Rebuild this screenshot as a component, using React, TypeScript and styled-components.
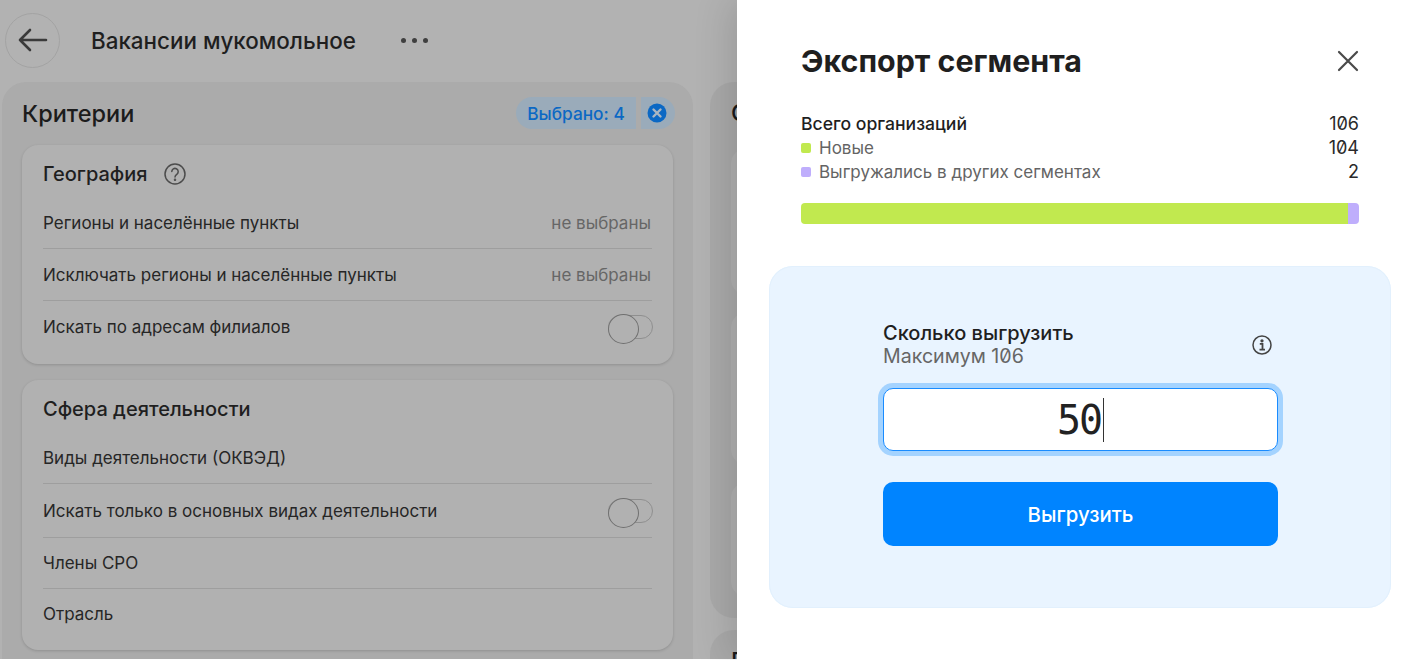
import styled, { createGlobalStyle } from 'styled-components';

const GlobalStyle = createGlobalStyle`
  html, body { margin: 0; padding: 0; background: #fff; }
  body { font-family: 'Inter', 'Liberation Sans', sans-serif; color: #1f1f1f; }
  * { box-sizing: border-box; }
`;

const Screen = styled.div`
  display: flex;
  width: 1418px;
  height: 660px;
  overflow: hidden;
`;

const Backdrop = styled.div`
  width: 737px;
  height: 659px;
  flex: none;
  background: #b2b2b2;
  overflow: hidden;
`;

const TopBar = styled.header`
  display: flex;
  align-items: center;
  height: 82px;
  padding: 0 0 2px 5px;
`;

const BackButton = styled.div`
  width: 55px;
  height: 55px;
  border-radius: 50%;
  border: 1px solid #a3a3a3;
  display: flex;
  align-items: center;
  justify-content: center;
  color: #3a3a3a;
`;

const PageTitle = styled.h1`
  margin: 0 0 0 31px;
  font-size: 22.4px;
  font-weight: 500;
`;

const Dots = styled.div`
  display: flex;
  gap: 6px;
  margin-left: 45px;
  span {
    width: 5px;
    height: 5px;
    border-radius: 50%;
    background: #3f3f3f;
  }
`;

const Columns = styled.div`
  display: flex;
  gap: 17px;
  padding-left: 2px;
`;

const Column = styled.section`
  width: 691px;
  flex: none;
  height: 640px;
  padding: 15px 20px 0;
  border-radius: 24px;
  background: #ababab;
`;

const SideColumn = styled.div`
  display: flex;
  flex-direction: column;
  gap: 12px;
`;

const SidePanel = styled.section<{ $height: number }>`
  width: 300px;
  height: ${(p) => p.$height}px;
  padding: 15px 21px 0;
  border-radius: 24px;
  background: #a9a9a9;
  display: flex;
  flex-direction: column;
  gap: 17px;
`;

const SideTitle = styled.div`
  font-size: 23.5px;
  font-weight: 500;
  line-height: 32px;
  margin-bottom: 2px;
  color: #1a1a1a;
`;

const SideCard = styled.div<{ $height: number }>`
  height: ${(p) => p.$height}px;
  flex: none;
  border-radius: 16px;
  background: #b0b0b0;
`;

const ColumnHead = styled.div`
  display: flex;
  align-items: center;
  justify-content: space-between;
  height: 32px;
  margin-bottom: 16px;
`;

const ColumnTitle = styled.h2`
  margin: 0;
  font-size: 23.5px;
  font-weight: 500;
  color: #1c1c1c;
`;

const Chips = styled.div`
  display: flex;
  gap: 5px;
  margin-right: -2px;
`;

const Chip = styled.div`
  width: 120px;
  height: 32px;
  display: flex;
  align-items: center;
  justify-content: center;
  font-size: 17.3px;
  font-weight: 500;
  color: #0b68c4;
  background: #9aabba;
  border-radius: 16px 0 0 16px;
`;

const ChipClose = styled.div`
  width: 34px;
  height: 32px;
  padding-right: 2px;
  display: flex;
  align-items: center;
  justify-content: center;
  background: #9aabba;
  border-radius: 0 16px 16px 0;
`;

const Card = styled.div`
  width: 651px;
  padding: 13px 21px 12px;
  margin-bottom: 16px;
  border-radius: 16px;
  background: #b1b1b1;
  box-shadow: 0 1px 3px rgba(0, 0, 0, 0.16);
`;

const CardTitle = styled.h3`
  display: flex;
  align-items: center;
  gap: 15px;
  margin: 0 0 7px;
  height: 32px;
  font-size: 20px;
  font-weight: 500;
  color: #1f1f1f;
`;

const Row = styled.div<{ $height?: number; $last?: boolean }>`
  display: flex;
  align-items: center;
  justify-content: space-between;
  height: ${(p) => p.$height ?? 52}px;
  font-size: 17px;
  color: #262626;
  border-bottom: ${(p) => (p.$last ? 'none' : '1px solid #9e9e9e')};
`;

const RowValue = styled.span`
  color: #666;
  margin-right: 1px;
`;

const Toggle = styled.div`
  position: relative;
  width: 45px;
  height: 24px;
  margin-right: -1px;
  border-radius: 12px;
  border: 1px solid #8f8f8f;
  &::before {
    content: '';
    position: absolute;
    left: -1px;
    top: -2px;
    width: 29px;
    height: 28px;
    border-radius: 50%;
    border: 1px solid #707070;
    background: #b1b1b1;
  }
`;

const Drawer = styled.aside`
  position: relative;
  flex: 1;
  background: #fff;
  padding: 36px 27px 0 32px;
  box-shadow: -6px 0 36px rgba(0, 0, 0, 0.14);
`;

const DrawerHead = styled.div`
  display: flex;
  align-items: center;
  justify-content: space-between;
  height: 50px;
  margin: 0 32px;
`;

const DrawerTitle = styled.h2`
  margin: 0;
  font-size: 30.4px;
  font-weight: 700;
  color: #1f1f1f;
`;

const Stats = styled.div`
  margin: 26px 32px 0;
`;

const StatRow = styled.div<{ $muted?: boolean }>`
  display: flex;
  justify-content: space-between;
  height: 24px;
  line-height: 24px;
  font-size: ${(p) => (p.$muted ? 17 : 17.6)}px;
  color: ${(p) => (p.$muted ? '#646464' : '#1f1f1f')};
  font-weight: ${(p) => (p.$muted ? 400 : 500)};
`;

const StatLabel = styled.span`
  display: flex;
  align-items: center;
  gap: 8px;
`;

const StatValue = styled.span`
  color: #2a2a2a;
  font-weight: 400;
  font-size: 18px;
  font-feature-settings: 'zero';
`;

const Mark = styled.i<{ $color: string }>`
  width: 10px;
  height: 10px;
  border-radius: 2px;
  background: ${(p) => p.$color};
`;

const Bar = styled.div`
  display: flex;
  height: 21px;
  margin: 19px 32px 0;
  border-radius: 4px;
  overflow: hidden;
`;

const BarPart = styled.div<{ $color: string }>`
  background: ${(p) => p.$color};
`;

const ExportBox = styled.div`
  width: 622px;
  height: 342px;
  margin-top: 42px;
  padding: 56px 113px 0 114px;
  border-radius: 24px;
  background: #e9f4ff;
  box-shadow: inset 0 0 0 1px #e2f0fd;
`;

const BoxHead = styled.div`
  display: flex;
  align-items: center;
  justify-content: space-between;
  padding-right: 6px;
`;

const BoxLabel = styled.div`
  font-size: 20px;
  font-weight: 500;
  line-height: 23px;
  color: #1f1f1f;
`;

const BoxHint = styled.div`
  font-size: 19.6px;
  line-height: 23px;
  color: #666;
  font-feature-settings: 'zero';
`;

const AmountField = styled.div`
  height: 63px;
  margin-top: 20px;
  display: flex;
  align-items: center;
  justify-content: center;
  background: #fff;
  border: 1px solid #1a8cff;
  border-radius: 10px;
  box-shadow: 0 0 0 5px #a4d3ff;
  font-family: 'DejaVu Sans Mono', monospace;
  font-size: 40px;
  letter-spacing: -2px;
  color: #222;
`;

const Caret = styled.span`
  display: inline-block;
  width: 1px;
  height: 44px;
  margin-left: 2px;
  background: #333;
`;

const ExportButton = styled.button`
  display: block;
  width: 100%;
  height: 64px;
  margin-top: 31px;
  border: none;
  border-radius: 10px;
  background: #0084ff;
  color: #fff;
  font: 500 20.4px 'Inter', 'Liberation Sans', sans-serif;
`;

export default function App() {
  return (
    <Screen>
      <GlobalStyle />
      <Backdrop>
        <TopBar>
          <BackButton>
            <svg width="30" height="30" viewBox="0 0 30 30" fill="none" stroke="currentColor" strokeWidth="2.6" strokeLinecap="round" strokeLinejoin="round">
              <path d="M28 15H2M12 5 2 15l10 10" />
            </svg>
          </BackButton>
          <PageTitle>Вакансии мукомольное</PageTitle>
          <Dots><span /><span /><span /></Dots>
        </TopBar>
        <Columns>
          <Column>
            <ColumnHead>
              <ColumnTitle>Критерии</ColumnTitle>
              <Chips>
                <Chip>Выбрано: 4</Chip>
                <ChipClose>
                  <svg width="20" height="20" viewBox="0 0 20 20">
                    <circle cx="10" cy="10" r="9.5" fill="#0b68c4" />
                    <path d="M6.5 6.5l7 7M13.5 6.5l-7 7" stroke="#a9b6c2" strokeWidth="2.4" strokeLinecap="round" />
                  </svg>
                </ChipClose>
              </Chips>
            </ColumnHead>
            <Card>
              <CardTitle>
                География
                <svg width="24" height="24" viewBox="0 0 24 24" fill="none" stroke="#4c4c4c" strokeWidth="1.5" strokeLinecap="round">
                  <circle cx="12" cy="12" r="10" />
                  <path d="M8.8 9.6a3.2 3.2 0 1 1 5.2 2.5c-1.2 0.9-2 1.5-2 3" />
                  <circle cx="12" cy="17.8" r="0.5" />
                </svg>
              </CardTitle>
              <Row>Регионы и населённые пункты<RowValue>не выбраны</RowValue></Row>
              <Row>Исключать регионы и населённые пункты<RowValue>не выбраны</RowValue></Row>
              <Row $last $height={51}>Искать по адресам филиалов<Toggle /></Row>
            </Card>
            <Card>
              <CardTitle>Сфера деятельности</CardTitle>
              <Row>Виды деятельности (ОКВЭД)</Row>
              <Row $height={54}>Искать только в основных видах деятельности<Toggle /></Row>
              <Row $height={51}>Члены СРО</Row>
              <Row $last $height={49}>Отрасль</Row>
            </Card>
          </Column>
          <SideColumn>
            <SidePanel $height={536}>
              <SideTitle>Сведения</SideTitle>
              <SideCard $height={147} />
              <SideCard $height={153} />
              <SideCard $height={115} />
            </SidePanel>
            <SidePanel $height={100}>
              <SideTitle>География</SideTitle>
            </SidePanel>
          </SideColumn>
        </Columns>
      </Backdrop>
      <Drawer>
        <DrawerHead>
          <DrawerTitle>Экспорт сегмента</DrawerTitle>
          <svg width="22" height="22" viewBox="0 0 22 22" fill="none" stroke="#4a4a4a" strokeWidth="2.2" strokeLinecap="round">
            <path d="M2 2l18 18M20 2L2 20" />
          </svg>
        </DrawerHead>
        <Stats>
          <StatRow><span>Всего организаций</span><StatValue>106</StatValue></StatRow>
          <StatRow $muted><StatLabel><Mark $color="#c1e94f" />Новые</StatLabel><StatValue>104</StatValue></StatRow>
          <StatRow $muted><StatLabel><Mark $color="#bfaefc" />Выгружались в других сегментах</StatLabel><StatValue>2</StatValue></StatRow>
        </Stats>
        <Bar>
          <BarPart $color="#c1e94f" style={{ width: `${(104 / 106) * 100}%` }} />
          <BarPart $color="#bfaefc" style={{ width: `${(2 / 106) * 100}%` }} />
        </Bar>
        <ExportBox>
          <BoxHead>
            <div>
              <BoxLabel>Сколько выгрузить</BoxLabel>
              <BoxHint>Максимум 106</BoxHint>
            </div>
            <svg width="20" height="20" viewBox="0 0 20 20" fill="none" stroke="#444" strokeWidth="1.5">
              <circle cx="10" cy="10" r="9" />
              <circle cx="10" cy="5.8" r="0.9" fill="#444" />
              <path d="M7.8 8.8H10.5V14.5M7.5 14.7H13" strokeWidth="1.8" />
            </svg>
          </BoxHead>
          <AmountField>50<Caret /></AmountField>
          <ExportButton>Выгрузить</ExportButton>
        </ExportBox>
      </Drawer>
    </Screen>
  );
}
